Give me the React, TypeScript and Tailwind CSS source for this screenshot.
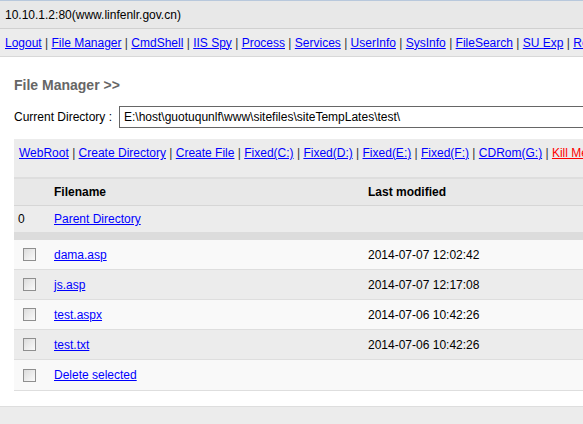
import React from "react";

const navLinks = ["Logout", "File Manager", "CmdShell", "IIS Spy", "Process", "Services", "UserInfo", "SysInfo", "FileSearch", "SU Exp", "RegShell", "PortScan"];
const toolLinks = ["WebRoot", "Create Directory", "Create File", "Fixed(C:)", "Fixed(D:)", "Fixed(E:)", "Fixed(F:)", "CDRom(G:)"];

const files = [
  { name: "dama.asp", date: "2014-07-07 12:02:42" },
  { name: "js.asp", date: "2014-07-07 12:17:08" },
  { name: "test.aspx", date: "2014-07-06 10:42:26" },
  { name: "test.txt", date: "2014-07-06 10:42:26" },
];

function Box() {
  return (
    <div className="w-[13px] h-[13px] border border-[#8f8f8f] bg-gradient-to-br from-[#dcdcdc] to-[#fbfbfb] shrink-0" />
  );
}

function Sep() {
  return <span className="text-[#333] whitespace-pre"> | </span>;
}

export default function App() {
  return (
    <div
      className="w-[583px] h-[424px] overflow-hidden bg-white text-[12px] text-black whitespace-nowrap"
      style={{ fontFamily: '"Liberation Sans", Arial, sans-serif' }}
    >
      <div className="h-[29px] bg-[#e8e8e8] border-t border-[#b8c8dc] border-b border-b-[#d0d0d0] flex items-center pl-[5px] text-[12px]">
        10.10.1.2:80(www.linfenlr.gov.cn)
      </div>
      <div className="h-[28px] bg-[#ececec] border-b border-[#d8d8d8] flex items-center pl-[5px] overflow-hidden">
        {navLinks.map((l, i) => (
          <React.Fragment key={l}>
            {i > 0 && <Sep />}
            <a className="text-[#0000ff] underline" href="#">{l}</a>
          </React.Fragment>
        ))}
      </div>
      <div className="pl-[14px]">
        <div className="pt-[18px] h-[46px] text-[14px] font-bold text-[#666]">File Manager &gt;&gt;</div>
        <div className="flex items-center h-[28px] overflow-hidden">
          <span className="w-[105px] shrink-0">Current Directory :</span>
          <div className="h-[22px] w-[500px] shrink-0 border border-[#666] flex items-center pl-[4px]">
            E:\host\guotuqunlf\www\sitefiles\siteTempLates\test\
          </div>
        </div>
        <div className="mt-[8px] bg-[#ececec]">
          <div className="h-[38px] flex items-center pl-[5px] pb-[10px] overflow-hidden">
            {toolLinks.map((l, i) => (
              <React.Fragment key={l}>
                {i > 0 && <Sep />}
                <a className="text-[#0000ff] underline" href="#">{l}</a>
              </React.Fragment>
            ))}
            <Sep />
            <a className="text-[#ff0000] underline" href="#">Kill Me</a>
          </div>
          <div className="h-[29px] border-t-2 border-[#dedede] border-b border-b-[#d6d6d6] bg-[#e8e8e8] flex items-center font-bold">
            <span className="w-[354px] pl-[40px]">Filename</span>
            <span>Last modified</span>
          </div>
          <div className="h-[26px] flex items-center">
            <span className="w-[40px] pl-[4px]">0</span>
            <a className="text-[#0000ff] underline" href="#">Parent Directory</a>
          </div>
          <div className="h-[8px] bg-[#dcdcdc]" />
          {files.map((f, i) => (
            <div
              key={f.name}
              className={`h-[30px] flex items-center border-b border-[#dedede] ${i % 2 === 0 ? "bg-[#f9f9f9]" : "bg-[#ececec]"}`}
            >
              <div className="w-[40px] pl-[9px]"><Box /></div>
              <span className="w-[314px]">
                <a className="text-[#0000ff] underline" href="#">{f.name}</a>
              </span>
              <span>{f.date}</span>
            </div>
          ))}
          <div className="h-[31px] flex items-center border-b border-[#dedede] bg-[#f9f9f9]">
            <div className="w-[40px] pl-[9px]"><Box /></div>
            <a className="text-[#0000ff] underline" href="#">Delete selected</a>
          </div>
        </div>
      </div>
      <div className="mt-[15px] h-[30px] bg-[#ececec] border-t border-[#dedede]" />
    </div>
  );
}
